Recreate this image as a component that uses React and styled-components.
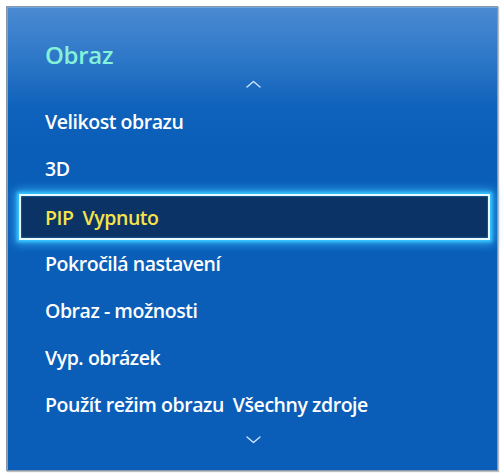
import React from "react";
import styled, { createGlobalStyle } from "styled-components";

const Global = createGlobalStyle`
  html, body { margin: 0; padding: 0; background: #ffffff; }
  body { font-family: "Open Sans", "Noto Sans", sans-serif; }
`;

const Page = styled.div`
  width: 504px;
  height: 475px;
  padding: 6px 6px 4px 6px;
  box-sizing: border-box;
`;

const Panel = styled.div`
  width: 492px;
  height: 465px;
  box-sizing: border-box;
  border: 1px solid #8796a8;
  box-shadow: inset 1px 1px 0 #6fa6e0, 1px 1px 1px rgba(120, 130, 140, 0.5);
  background: linear-gradient(
    to bottom,
    #4a8bd2 0px,
    #2f78c8 50px,
    #0f62bb 100px,
    #0a5eb8 140px,
    #0a5eb8 100%
  );
  display: flex;
  flex-direction: column;
  padding: 33px 7px 0 12px;
`;

const Title = styled.div`
  font-size: 24px;
  line-height: 30px;
  font-weight: 600;
  color: #84f1d9;
  padding-left: 26px;
  letter-spacing: -0.3px;
`;

const ChevronRow = styled.div`
  display: flex;
  justify-content: center;
  height: ${(p) => p.$h}px;
  align-items: center;
  padding-right: 2px;
`;

const List = styled.div`
  display: flex;
  flex-direction: column;
`;

const Row = styled.div`
  height: 47px;
  display: flex;
  align-items: center;
  box-sizing: border-box;
  padding-left: 26px;
  font-size: 19.5px;
  font-weight: 600;
  letter-spacing: -0.45px;
  color: ${(p) => (p.$active ? "#f6e34a" : "#ffffff")};
  ${(p) =>
    p.$active &&
    `
    background: #0c3366;
    border: 2px solid #e9fbff;
    box-shadow: 0 0 3px 2px #38c8ff, 0 0 9px 4px rgba(60, 190, 255, 0.75), inset 0 0 2px #2aa0e0;
    padding-left: 24px;
    margin: 2px 0 0 0;
    height: 46px;
  `}
`;

const Gap = styled.span`
  display: inline-block;
  width: 9px;
`;

const Chevron = ({ dir }) => (
  <svg width="15" height="8" viewBox="0 0 15 8">
    <path
      d={dir === "up" ? "M1 7 L7.5 1.5 L14 7" : "M1 1 L7.5 6.5 L14 1"}
      fill="none"
      stroke="#cfe5ff"
      strokeWidth="1.4"
      strokeLinecap="round"
      strokeLinejoin="round"
    />
  </svg>
);

const items = [
  ["Velikost obrazu"],
  ["3D"],
  ["PIP", "Vypnuto"],
  ["Pokročilá nastavení"],
  ["Obraz - možnosti"],
  ["Vyp. obrázek"],
  ["Použít režim obrazu", "Všechny zdroje"],
];

export default function App() {
  return (
    <>
      <Global />
      <Page>
        <Panel>
          <Title>Obraz</Title>
          <ChevronRow $h={28}>
            <Chevron dir="up" />
          </ChevronRow>
          <List>
            {items.map((it, i) => (
              <Row key={i} $active={i === 2}>
                {it[0]}
                {it[1] && (
                  <>
                    <Gap />
                    {it[1]}
                  </>
                )}
              </Row>
            ))}
          </List>
          <ChevronRow $h={24}>
            <Chevron dir="down" />
          </ChevronRow>
        </Panel>
      </Page>
    </>
  );
}
